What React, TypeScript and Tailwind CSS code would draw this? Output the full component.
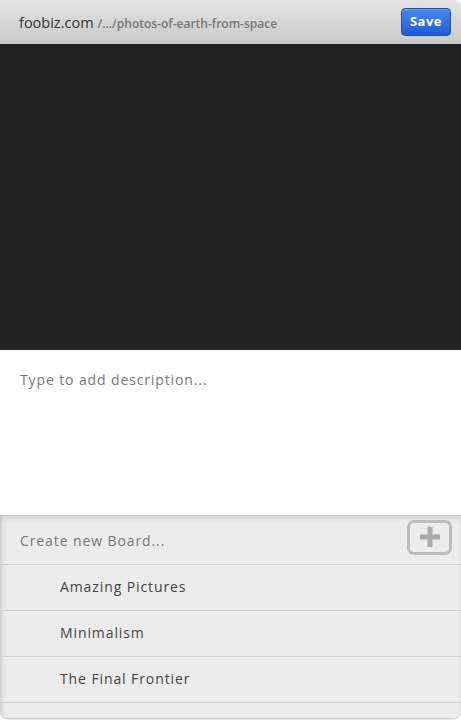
import React from "react";

export default function App() {
  const boards = ["Amazing Pictures", "Minimalism", "The Final Frontier"];
  return (
    <div className="w-[461px] h-[720px] bg-white overflow-hidden" style={{ fontFamily: '"Open Sans", sans-serif' }}>
      <div className="w-full h-[718px] flex flex-col rounded-tr-[8px] rounded-b-[8px] overflow-hidden shadow-[0_1px_2px_rgba(0,0,0,0.25)]">
        <div className="h-[44px] shrink-0 flex items-center justify-between pl-[19px] pr-[10px] bg-gradient-to-b from-[#e4e4e4] to-[#c9c9c9]">
          <div className="flex items-baseline text-[#333] pt-[2px]">
            <span className="text-[14.5px]">foobiz.com</span>
            <span className="text-[12px] text-[#777] font-semibold ml-[4px]">/.../photos-of-earth-from-space</span>
          </div>
          <button className="w-[50px] h-[28px] rounded-[4px] border border-[#2a4f9a] bg-gradient-to-b from-[#4a88ec] to-[#1f5ad6] text-white text-[13px] font-bold tracking-[0.5px] flex items-center justify-center shadow-[inset_0_1px_0_rgba(255,255,255,0.25)]">
            Save
          </button>
        </div>
        <div className="h-[306px] shrink-0 bg-[#222222]" />
        <div className="h-[165px] shrink-0 bg-white px-[20px] pt-[20px]">
          <div className="text-[14px] text-[#777] tracking-[0.88px] leading-[20px]">Type to add description...</div>
        </div>
        <div className="flex-1 bg-[#ececec] flex flex-col shadow-[inset_0_4px_6px_-2px_rgba(0,0,0,0.15),inset_4px_0_5px_-3px_rgba(0,0,0,0.15)]">
          <div className="h-[50px] shrink-0 flex items-center justify-between pl-[20px] pr-[9px] border-b border-[#cfcfcf]">
            <span className="text-[14px] text-[#777] tracking-[0.9px] pt-[2px]">Create new Board...</span>
            <div className="w-[45px] h-[35px] rounded-[7px] border-[3px] border-[#bdbdbd] flex items-center justify-center mt-[-5px]">
              <svg width="22" height="22" viewBox="0 0 22 22">
                <rect x="8.5" y="1" width="5" height="20" fill="#aaaaaa" />
                <rect x="1" y="8.5" width="20" height="5" fill="#aaaaaa" />
              </svg>
            </div>
          </div>
          {boards.map((b) => (
            <div key={b} className="h-[46px] shrink-0 flex items-center pl-[60px] pb-[2px] border-b border-[#cfcfcf]">
              <span className="text-[14px] text-[#444] tracking-[0.9px]">{b}</span>
            </div>
          ))}
        </div>
      </div>
    </div>
  );
}
